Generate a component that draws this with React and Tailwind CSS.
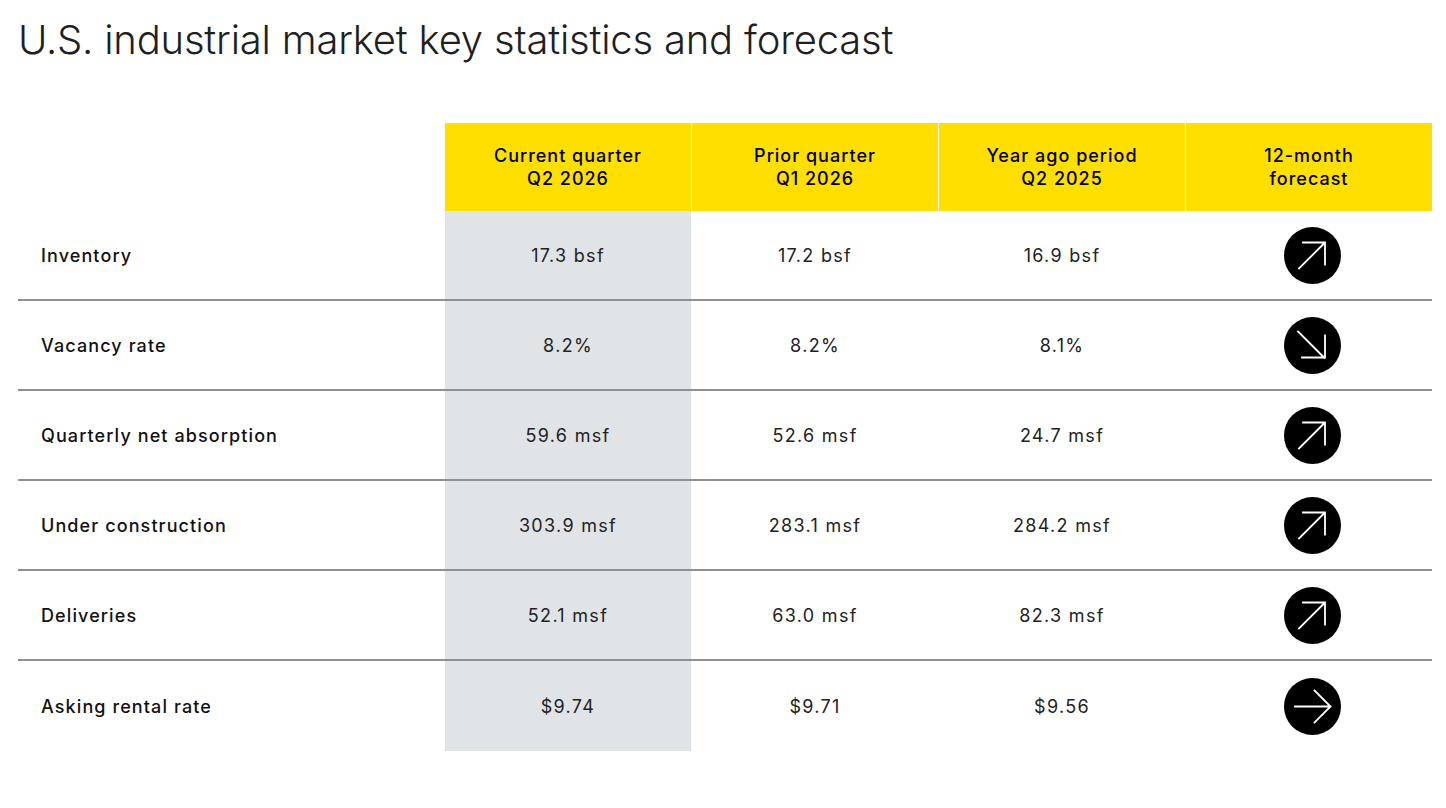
const rows = [
  { label: "Inventory", current: "17.3 bsf", prior: "17.2 bsf", yearAgo: "16.9 bsf", trend: "up" },
  { label: "Vacancy rate", current: "8.2%", prior: "8.2%", yearAgo: "8.1%", trend: "down" },
  { label: "Quarterly net absorption", current: "59.6 msf", prior: "52.6 msf", yearAgo: "24.7 msf", trend: "up" },
  { label: "Under construction", current: "303.9 msf", prior: "283.1 msf", yearAgo: "284.2 msf", trend: "up" },
  { label: "Deliveries", current: "52.1 msf", prior: "63.0 msf", yearAgo: "82.3 msf", trend: "up" },
  { label: "Asking rental rate", current: "$9.74", prior: "$9.71", yearAgo: "$9.56", trend: "flat" },
];

const headers = [
  ["Current quarter", "Q2 2026"],
  ["Prior quarter", "Q1 2026"],
  ["Year ago period", "Q2 2025"],
  ["12-month", "forecast"],
];

// arrow paths drawn on a 57x57 circle
const arrows = {
  up: "M15 41.5 L40.5 16 M19 15.5 H41 V37.5",
  down: "M14 14.5 L40.5 41 M18 40.5 H41 V18.5",
  flat: "M11 28.5 H46.5 M30.5 12.5 L46.5 28.5 L30.5 44.5",
};

function TrendIcon({ trend }) {
  return (
    <svg width="57" height="57" viewBox="0 0 57 57">
      <circle cx="28.5" cy="28.5" r="28.5" fill="#000" />
      <path d={arrows[trend]} fill="none" stroke="#fff" strokeWidth="1.8" strokeLinecap="square" />
    </svg>
  );
}

export default function App() {
  return (
    <div className="w-[1446px] h-[808px] bg-white text-[#1a1a1a] font-['Inter','Liberation_Sans',sans-serif]">
      <h1 className="pl-[18px] pt-[14px] text-[40px] leading-[52px] font-light tracking-[-0.2px] text-[#1f1f1f]">
        U.S. industrial market key statistics and forecast
      </h1>

      <div className="ml-[18px] mt-[57px] w-[1414px]">
        {/* header */}
        <div className="flex">
          <div className="w-[427px]" />
          <div className="flex gap-px">
            {headers.map(([a, b]) => (
              <div
                key={a}
                className="w-[246px] h-[88px] bg-[#ffdf00] flex flex-col items-center justify-center text-[18px] leading-[23px] font-medium tracking-[1px] text-black"
              >
                <span>{a}</span>
                <span>{b}</span>
              </div>
            ))}
          </div>
        </div>

        {/* body */}
        {rows.map((r, i) => (
          <div
            key={r.label}
            className={`flex h-[90px] ${i < rows.length - 1 ? "border-b-2 border-[#909090]" : ""}`}
          >
            <div className="w-[427px] pl-[23px] flex items-center text-[18px] font-medium tracking-[1.1px] text-[#111]">
              {r.label}
            </div>
            <div className="flex gap-px text-[18px] tracking-[1.3px] text-[#222]">
              <div className="w-[246px] bg-[#e1e4e7] flex items-center justify-center">{r.current}</div>
              <div className="w-[246px] flex items-center justify-center">{r.prior}</div>
              <div className="w-[246px] flex items-center justify-center">{r.yearAgo}</div>
              <div className="w-[246px] flex items-center justify-center pl-[7px]">
                <TrendIcon trend={r.trend} />
              </div>
            </div>
          </div>
        ))}
      </div>
    </div>
  );
}
